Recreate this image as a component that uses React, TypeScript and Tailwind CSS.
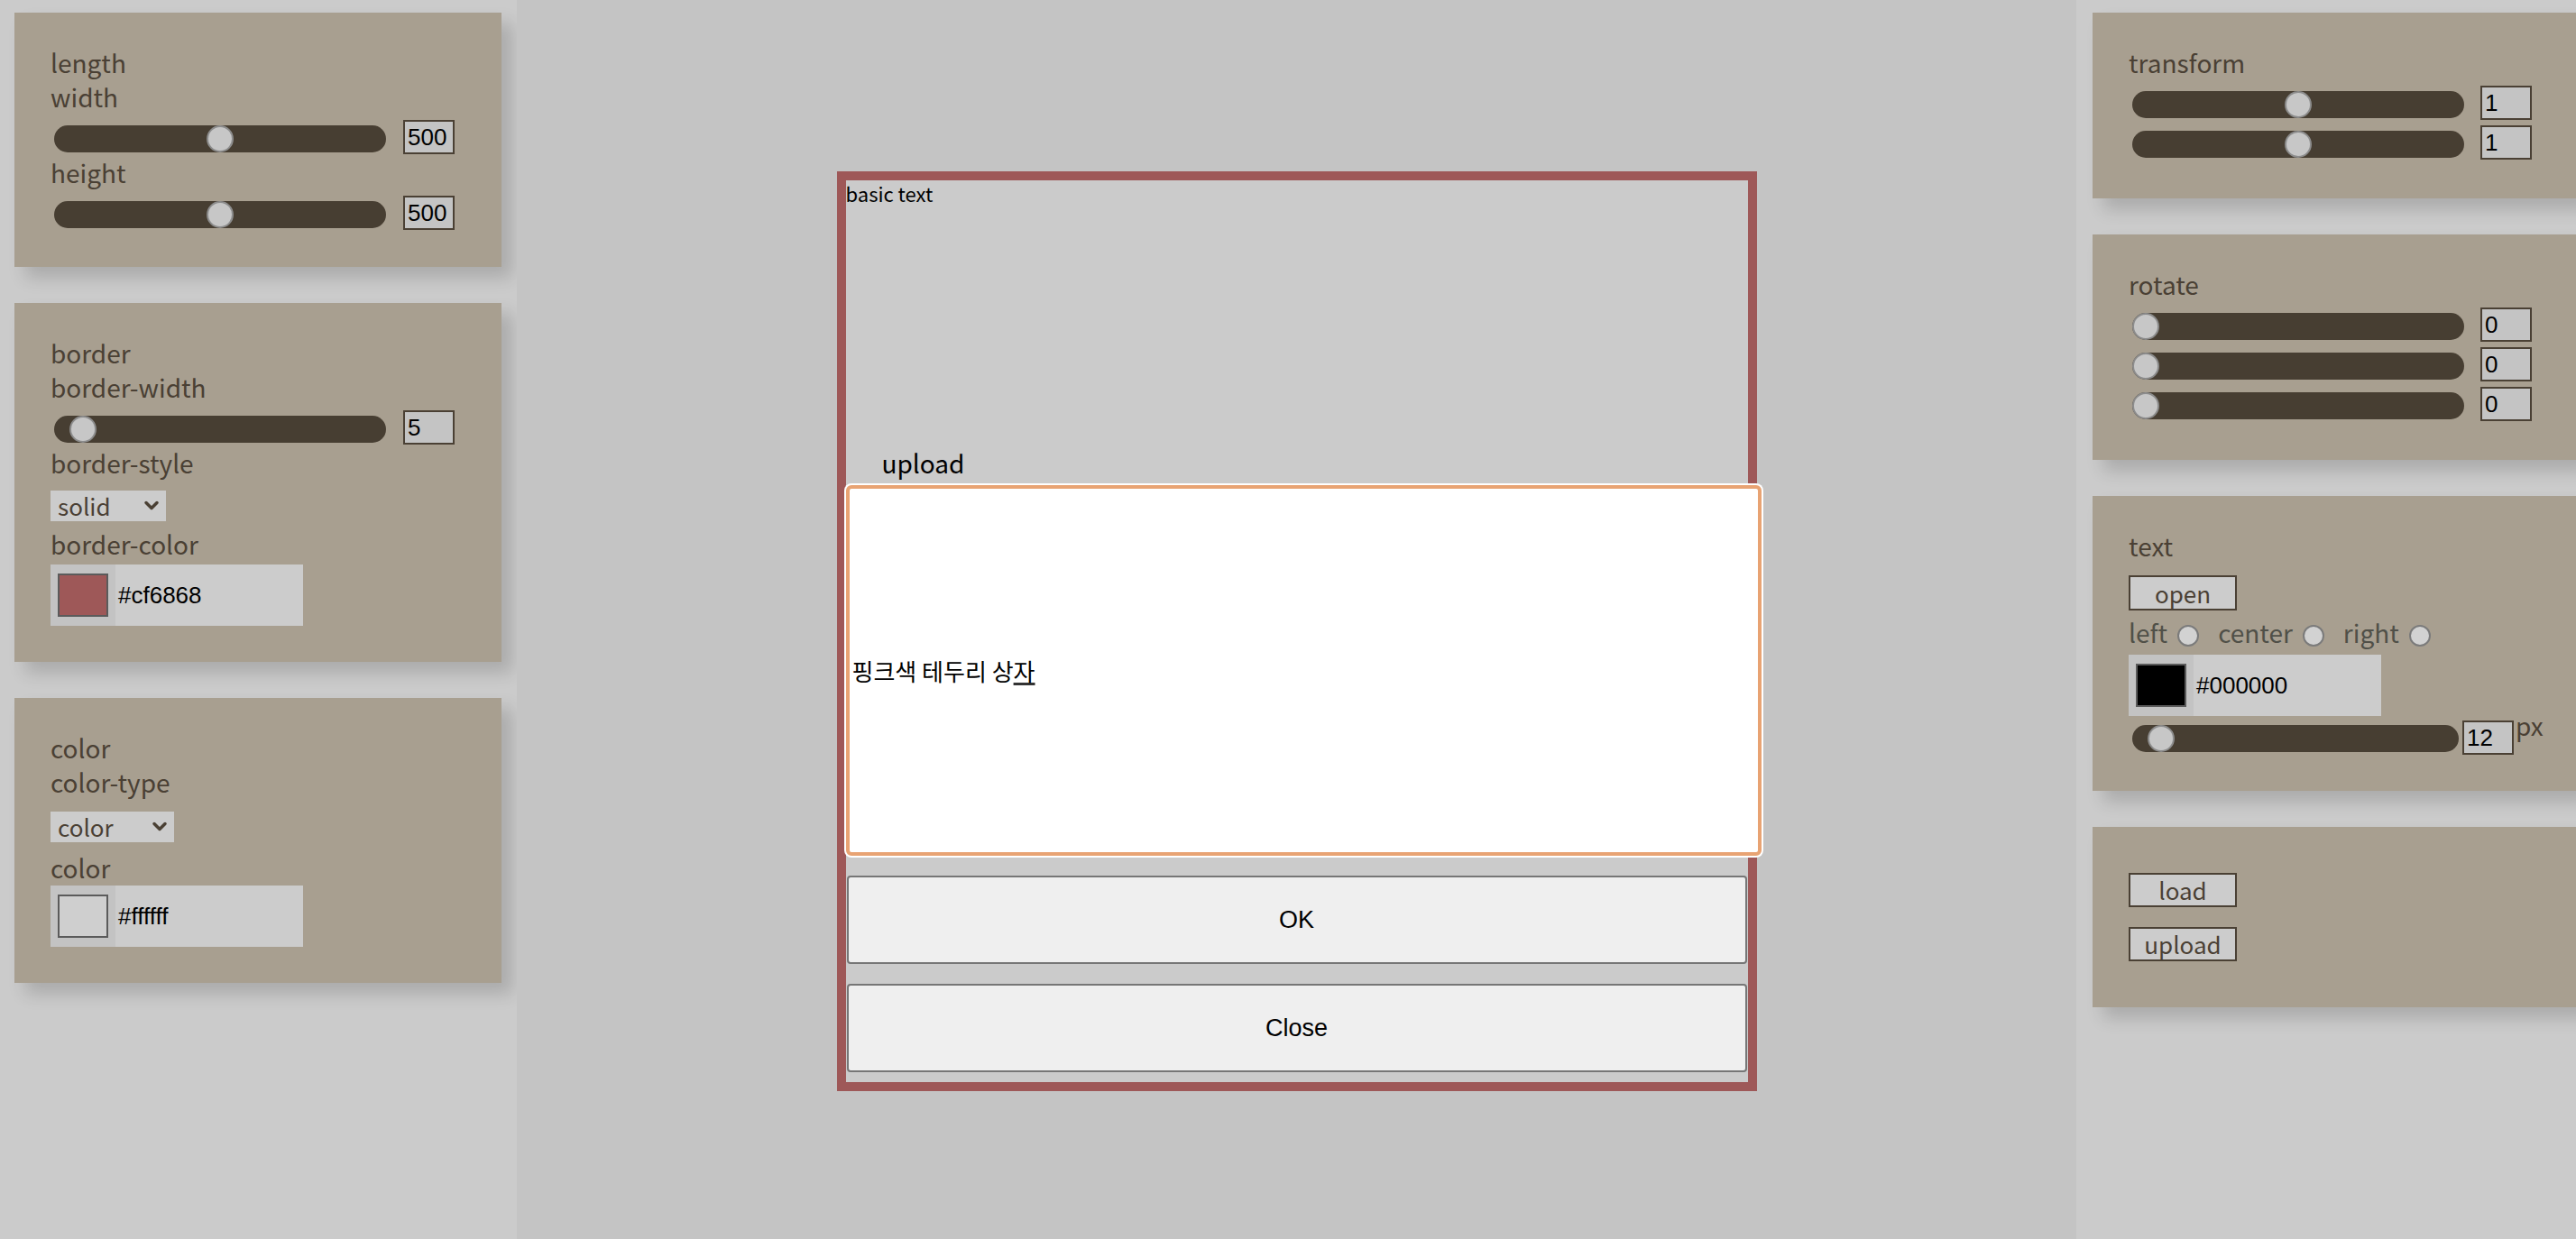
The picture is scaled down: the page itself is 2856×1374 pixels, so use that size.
import React from "react";

const label =
  "h-[38px] text-[28px] leading-[38px] text-[#4a4034] whitespace-nowrap";
const numFont = "font-['Liberation_Sans',Arial,sans-serif]";
const thumb =
  "[&::-webkit-slider-thumb]:appearance-none [&::-webkit-slider-thumb]:h-[30px] [&::-webkit-slider-thumb]:w-[30px] [&::-webkit-slider-thumb]:rounded-full [&::-webkit-slider-thumb]:border-2 [&::-webkit-slider-thumb]:border-[#8c8c8c] [&::-webkit-slider-thumb]:bg-[#c7c7c7]";

interface SliderProps {
  value: number;
  min: number;
  max: number;
  className?: string;
}

const Slider: React.FC<SliderProps> = ({ value, min, max, className = "" }) => (
  <input
    type="range"
    min={min}
    max={max}
    defaultValue={value}
    className={`m-0 ml-[4px] h-[30px] shrink-0 appearance-none rounded-full bg-[#473e32] outline-none ${thumb} ${className}`}
  />
);

const NumBox: React.FC<{ value: string; className?: string }> = ({ value, className = "" }) => (
  <input
    type="text"
    readOnly
    defaultValue={value}
    className={`h-[38px] w-[57px] shrink-0 border-2 border-[#4a4034] bg-[#c4c4c4] px-[3px] text-[26px] text-black outline-none ${numFont} ${className}`}
  />
);

// slider + number box under a label (left sidebar)
const SliderRow: React.FC<{ value: number; min: number; max: number }> = ({ value, min, max }) => (
  <div className="flex h-[46px] items-start">
    <Slider value={value} min={min} max={max} className="mt-[13px] w-[368px]" />
    <NumBox value={String(value)} className="ml-[19px] mt-[7px]" />
  </div>
);

// stacked sliders (right sidebar)
const RightRow: React.FC<{ value: number; min: number; max: number }> = ({ value, min, max }) => (
  <div className="flex h-[44px] items-start">
    <Slider value={value} min={min} max={max} className="mt-[13px] w-[368px]" />
    <NumBox value={String(value)} className="ml-[18px] mt-[7px]" />
  </div>
);

const Select: React.FC<{ value: string; className: string }> = ({ value, className }) => (
  <div className={`relative h-[34px] ${className}`}>
    <select
      defaultValue={value}
      className="h-[34px] w-full appearance-none rounded-none border-0 bg-[#cccccc] py-0 pl-[8px] text-[26px] leading-[28px] text-[#4a4034] outline-none"
    >
      <option value={value}>{value}</option>
    </select>
    <svg
      className="pointer-events-none absolute right-[7px] top-[11px]"
      width="18"
      height="12"
      viewBox="0 0 18 12"
    >
      <path d="M3 2.5 L9 8.5 L15 2.5" fill="none" stroke="#4a4034" strokeWidth="3.5" strokeLinecap="round" strokeLinejoin="round" />
    </svg>
  </div>
);

const ColorBox: React.FC<{ swatch: string; text: string; className?: string }> = ({ swatch, text, className = "" }) => (
  <div className={`flex h-[68px] w-[280px] bg-[#cccccc] ${className}`}>
    <div className="flex w-[72px] items-center justify-center bg-[#c3c3c3]">
      <div className="h-[48px] w-[56px] border-2 border-[#5b5b5b]" style={{ backgroundColor: swatch }} />
    </div>
    <span className={`ml-[3px] self-center text-[26px] text-black ${numFont}`}>{text}</span>
  </div>
);

const Panel: React.FC<{ children: React.ReactNode; className?: string }> = ({ children, className = "" }) => (
  <div className={`w-[540px] shrink-0 bg-[#a89f90] px-[40px] pt-[36px] shadow-[12px_12px_18px_rgba(0,0,0,0.16)] ${className}`}>
    {children}
  </div>
);

const Btn: React.FC<{ children: React.ReactNode; className?: string }> = ({ children, className = "" }) => (
  <button className={`block w-[120px] border-2 border-[#4a4034] bg-[#cccccc] text-[26px] leading-none text-[#4a4034] ${className}`}>
    {children}
  </button>
);

const Radio: React.FC = () => (
  <input
    type="radio"
    name="align"
    className="m-0 ml-[11px] mt-[8px] h-[24px] w-[24px] appearance-none rounded-full border-2 border-[#7b7b7b] bg-[#d2d2d2]"
  />
);

export default function App() {
  return (
    <div className="flex h-[1374px] w-[2856px] overflow-hidden font-['Noto_Sans_CJK_KR','Noto_Sans',sans-serif]">
      {/* left controls */}
      <aside className="flex w-[573px] shrink-0 flex-col gap-[40px] bg-[#cbcbcb] pl-[16px] pt-[14px]">
        <Panel className="pb-[40px]">
          <div className={label}>length</div>
          <div className={label}>width</div>
          <SliderRow value={500} min={0} max={1000} />
          <div className={label}>height</div>
          <SliderRow value={500} min={0} max={1000} />
        </Panel>
        <Panel className="pb-[40px]">
          <div className={label}>border</div>
          <div className={label}>border-width</div>
          <SliderRow value={5} min={0} max={100} />
          <div className={label}>border-style</div>
          <Select value="solid" className="mt-[12px] w-[128px]" />
          <div className={`${label} mt-[6px]`}>border-color</div>
          <ColorBox swatch="#9e5858" text="#cf6868" className="mt-[4px]" />
        </Panel>
        <Panel className="pb-[40px]">
          <div className={label}>color</div>
          <div className={label}>color-type</div>
          <Select value="color" className="mt-[14px] w-[137px]" />
          <div className={`${label} mt-[9px]`}>color</div>
          <ColorBox swatch="#cfcfcf" text="#ffffff" className="mt-[1px]" />
        </Panel>
      </aside>

      {/* canvas */}
      <main className="flex flex-1 justify-center bg-[#c4c4c4] pt-[190px]">
        <div className="flex h-[1020px] w-[1020px] flex-col border-[10px] border-[#9e5858] bg-[#cbcbcb]">
          <div className="text-[22px] leading-[28px] text-black">basic text</div>
          <div className="mb-[5px] mt-auto pl-[40px] text-[28px] leading-[40px] text-black">upload</div>
          <div className="flex h-[411px] w-[1015px] shrink-0 items-center rounded-[6px] border-[4px] border-[#e8a373] bg-white pl-[3px] text-[26px] text-black shadow-[0_0_0_2px_#ffffff]">
            <span>
              핑크색 테두리 상<span className="underline decoration-[#333333] decoration-[3px] underline-offset-[2px]">자</span>
            </span>
          </div>
          <button className={`ml-[1px] mt-[22px] h-[98px] w-[998px] shrink-0 rounded-[4px] border-2 border-[#767676] bg-[#efefef] text-[27px] text-black ${numFont}`}>
            OK
          </button>
          <button className={`mb-[11px] ml-[1px] mt-[22px] h-[98px] w-[998px] shrink-0 rounded-[4px] border-2 border-[#767676] bg-[#efefef] text-[27px] text-black ${numFont}`}>
            Close
          </button>
        </div>
      </main>

      {/* right controls */}
      <aside className="flex w-[554px] shrink-0 flex-col gap-[40px] overflow-hidden bg-[#cbcbcb] pl-[18px] pt-[14px]">
        <Panel className="pb-[44px]">
          <div className={label}>transform</div>
          <RightRow value={1} min={0} max={2} />
          <RightRow value={1} min={0} max={2} />
        </Panel>
        <Panel className="pb-[44px]">
          <div className={label}>rotate</div>
          <RightRow value={0} min={0} max={360} />
          <RightRow value={0} min={0} max={360} />
          <RightRow value={0} min={0} max={360} />
        </Panel>
        <Panel className="pb-[42px]">
          <div className={label}>text</div>
          <Btn className="mt-[14px] h-[39px]">open</Btn>
          <div className="mt-[5px] flex h-[38px] items-center text-[28px] text-[#505048]">
            <span>left</span>
            <Radio />
            <span className="ml-[21px]">center</span>
            <Radio />
            <span className="ml-[21px]">right</span>
            <Radio />
          </div>
          <ColorBox swatch="#000000" text="#000000" className="mt-[6px]" />
          <div className="flex h-[41px] items-start">
            <Slider value={12} min={10} max={50} className="mt-[10px] w-[362px]" />
            <NumBox value="12" className="ml-[4px] mt-[5px]" />
            <span className="-mt-[9px] ml-[2px] text-[28px] leading-[38px] text-[#4a4034]">px</span>
          </div>
        </Panel>
        <Panel className="pb-[40px] !pt-[40px]">
          <Btn className="mt-[11px] h-[38px]">load</Btn>
          <Btn className="mb-[11px] mt-[22px] h-[38px]">upload</Btn>
        </Panel>
      </aside>
    </div>
  );
}
